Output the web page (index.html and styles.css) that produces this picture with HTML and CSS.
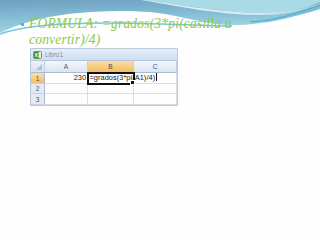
FILE: index.html
```html
<!DOCTYPE html>
<html>
<head>
<meta charset="utf-8">
<link rel="stylesheet" href="styles.css">
</head>
<body>
<div class="slide">
  <svg class="wave" width="320" height="40" viewBox="0 0 320 40" aria-hidden="true">
    <defs>
      <linearGradient id="g1" x1="0" y1="0" x2="0.25" y2="1">
        <stop offset="0" stop-color="#6e9fc0"/>
        <stop offset="0.55" stop-color="#86bfd6"/>
        <stop offset="1" stop-color="#a3d9e4"/>
      </linearGradient>
      <linearGradient id="g2" x1="0" y1="0" x2="1" y2="0">
        <stop offset="0" stop-color="#ffffff" stop-opacity="0.95"/>
        <stop offset="0.7" stop-color="#ffffff" stop-opacity="0.6"/>
        <stop offset="1" stop-color="#ffffff" stop-opacity="0.2"/>
      </linearGradient>
    </defs>
    <path d="M0,0 H320 V9 C292,18 258,26 230,25 C200,24 182,15 150,12 C112,9 62,12 32,21 C18,25 8,29 0,33 Z" fill="url(#g1)"/>
    <path d="M140,0 C180,5 230,13 265,13 C290,13 305,8 320,2 V0 Z" fill="#a9dbe7"/>
    <path d="M142,0 C185,6 228,13 262,13 C285,13 303,9 320,3 V5 C300,12 282,15 260,15 C222,15 182,7 142,0 Z" fill="url(#g2)"/>
    <path d="M250,22 C280,20 300,12 320,5" fill="none" stroke="#4aa6d0" stroke-width="1"/>
    <path d="M265,22 C290,18 306,11 320,8" fill="none" stroke="#6cc3dd" stroke-width="0.8"/>
    <path d="M0,34 C22,26 55,23 105,23 C160,23 200,26 232,26" fill="none" stroke="#58c2d6" stroke-width="1.4" stroke-opacity="0.85"/>
  </svg>

  <div class="content">
    <div class="bullet-row">
      <span class="bullet"></span>
      <p class="bullet-text">FORMULA: =grados(3*pi(casilla a convertir)/4)</p>
    </div>

    <div class="sheet">
      <div class="titlebar">
        <svg class="xl-icon" width="9" height="8" viewBox="0 0 9 8" aria-hidden="true">
          <rect x="0.5" y="0.5" width="8" height="7" rx="1" fill="#e8f3e4" stroke="#5a9a4c"/>
          <rect x="1" y="1" width="4.5" height="6" fill="#3f8f3a"/>
          <path d="M1.8,2 L4.6,6 M4.6,2 L1.8,6" stroke="#fff" stroke-width="0.9"/>
        </svg>
        <span class="title">Libro1</span>
      </div>
      <div class="grid">
        <div class="hd corner"></div>
        <div class="hd">A</div>
        <div class="hd sel">B</div>
        <div class="hd">C</div>

        <div class="rh sel">1</div>
        <div class="cell num">230</div>
        <div class="cell active"><span class="formula">=grados(3*pi(A1)/4)</span><span class="caret"></span></div>
        <div class="cell"></div>

        <div class="rh">2</div>
        <div class="cell"></div>
        <div class="cell"></div>
        <div class="cell"></div>

        <div class="rh">3</div>
        <div class="cell"></div>
        <div class="cell"></div>
        <div class="cell"></div>
      </div>
    </div>
  </div>
</div>
</body>
</html>
```

FILE: styles.css
```css
html, body {
  margin: 0;
  padding: 0;
  background: #fefefe;
}

.slide {
  position: relative;
  width: 320px;
  height: 240px;
  overflow: hidden;
  background: #fefefe;
}

.wave {
  position: absolute;
  left: 0;
  top: 0;
  display: block;
}

.content {
  position: relative;
  padding: 16px 0 0 21px;
}

.bullet-row {
  display: flex;
  align-items: flex-start;
  gap: 5px;
}

.bullet {
  flex: none;
  width: 3px;
  height: 3px;
  margin-top: 7px;
  border-radius: 1px;
  background: #39b3d6;
}

.bullet-text {
  margin: 0;
  width: 206px;
  font-family: "Liberation Serif", serif;
  font-style: italic;
  font-size: 13.6px;
  line-height: 16px;
  color: #90c84a;
  letter-spacing: 0.15px;
}

.sheet {
  margin: 0 0 0 9px;
  width: 148px;
  border: 1px solid #b9c8db;
  box-sizing: border-box;
  font-family: "Liberation Sans", Arial, sans-serif;
}

.titlebar {
  height: 11px;
  display: flex;
  align-items: center;
  gap: 3px;
  padding-left: 2px;
  background: linear-gradient(#e6eef9, #cfdef1);
  border-bottom: 1px solid #b5c6dc;
}

.xl-icon {
  display: block;
}

.title {
  font-size: 6.5px;
  color: #8090a6;
}

.grid {
  display: grid;
  grid-template-columns: 14px 43px 46px 43px;
  grid-template-rows: 12px 11px 10px 11px;
}

.hd, .rh {
  display: flex;
  align-items: center;
  justify-content: center;
  font-size: 6.5px;
  color: #45587a;
  background: linear-gradient(#f4f7fb, #dbe4f0);
  border-right: 1px solid #c3cfdf;
  border-bottom: 1px solid #a9bad2;
  box-sizing: border-box;
}

.rh {
  background: #e3eaf5;
  border-bottom: 1px solid #c8d3e3;
  border-right: 1px solid #a9bad2;
}

.hd.sel, .rh.sel {
  background: linear-gradient(#fadfa6, #f3bd63);
  color: #3f4a5e;
}

.corner {
  position: relative;
  background: linear-gradient(#eef2f8, #d8e1ed);
}

.corner::after {
  content: "";
  position: absolute;
  right: 2px;
  bottom: 2px;
  width: 0;
  height: 0;
  border-left: 6px solid transparent;
  border-bottom: 6px solid #b3c1d5;
}

.cell {
  border-right: 1px solid #d9dfe8;
  border-bottom: 1px solid #d9dfe8;
  box-sizing: border-box;
  font-size: 7.4px;
  line-height: 10px;
  color: #1a1a1a;
  white-space: nowrap;
}

.cell.num {
  text-align: right;
  padding-right: 1px;
}

.cell.active {
  position: relative;
  overflow: visible;
  outline: 2px solid #111;
  outline-offset: -1px;
  padding-left: 1.5px;
}

.cell.active::after {
  content: "";
  position: absolute;
  right: -2px;
  bottom: -2px;
  width: 3px;
  height: 3px;
  background: #111;
  border: 1px solid #fff;
}

.formula {
  letter-spacing: 0.05px;
}

.caret {
  display: inline-block;
  width: 0;
  height: 8px;
  margin-left: 1px;
  vertical-align: -1px;
  border-left: 1px solid #111;
}
```
